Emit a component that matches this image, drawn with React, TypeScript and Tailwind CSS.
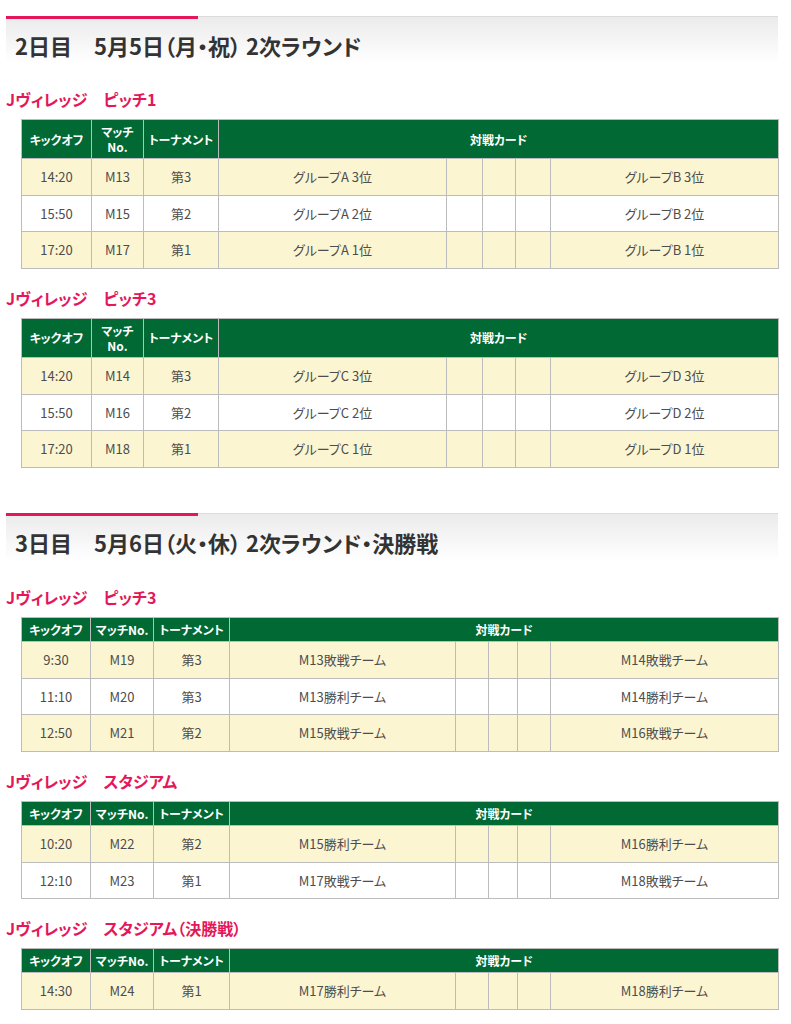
import React from "react";

type Row = { time: string; no: string; round: string; home: string; away: string };
type Venue = { name: string; rows: Row[] };

const day1: Venue[] = [
  {
    name: "Jヴィレッジ　ピッチ1",
    rows: [
      { time: "14:20", no: "M13", round: "第3", home: "グループA 3位", away: "グループB 3位" },
      { time: "15:50", no: "M15", round: "第2", home: "グループA 2位", away: "グループB 2位" },
      { time: "17:20", no: "M17", round: "第1", home: "グループA 1位", away: "グループB 1位" },
    ],
  },
  {
    name: "Jヴィレッジ　ピッチ3",
    rows: [
      { time: "14:20", no: "M14", round: "第3", home: "グループC 3位", away: "グループD 3位" },
      { time: "15:50", no: "M16", round: "第2", home: "グループC 2位", away: "グループD 2位" },
      { time: "17:20", no: "M18", round: "第1", home: "グループC 1位", away: "グループD 1位" },
    ],
  },
];

const day2: Venue[] = [
  {
    name: "Jヴィレッジ　ピッチ3",
    rows: [
      { time: "9:30", no: "M19", round: "第3", home: "M13敗戦チーム", away: "M14敗戦チーム" },
      { time: "11:10", no: "M20", round: "第3", home: "M13勝利チーム", away: "M14勝利チーム" },
      { time: "12:50", no: "M21", round: "第2", home: "M15敗戦チーム", away: "M16敗戦チーム" },
    ],
  },
  {
    name: "Jヴィレッジ　スタジアム",
    rows: [
      { time: "10:20", no: "M22", round: "第2", home: "M15勝利チーム", away: "M16勝利チーム" },
      { time: "12:10", no: "M23", round: "第1", home: "M17敗戦チーム", away: "M18敗戦チーム" },
    ],
  },
  {
    name: "Jヴィレッジ　スタジアム（決勝戦）",
    rows: [{ time: "14:30", no: "M24", round: "第1", home: "M17勝利チーム", away: "M18勝利チーム" }],
  },
];

const DayHeading = ({ title, className = "" }: { title: string; className?: string }) => (
  <div className={`relative border-t border-[#dcdcdc] ${className}`}>
    {/* pink accent */}
    <div className="absolute left-0 top-[-1px] h-[3px] w-[192px] bg-[#e5175b]"></div>
    <h2 className="h-[46px] bg-gradient-to-b from-[#ebebeb] to-white pl-[9px] pt-[13px] text-[22px] leading-[30px] font-bold text-[#333]">
      {title}
    </h2>
  </div>
);

const MatchTable = ({ venue, wide }: { venue: Venue; wide: boolean }) => {
  const cols = wide ? [70, 52, 75, 228, 36, 33, 35, 228] : [69, 63, 76, 226, 33, 29, 33, 228];
  const th = "border border-[#bcbcbc] bg-[#006934] p-0 whitespace-nowrap text-[12px] font-bold text-white leading-[15px]";
  const td = "border border-[#bcbcbc] p-0 text-center text-[13px] text-[#4d4d4d]";
  return (
    <div>
      <h3 className="h-[20px] text-[16px] leading-[20px] font-bold text-[#e5175b]">{venue.name}</h3>
      <table className="mt-[10px] ml-[15px] w-[757px] table-fixed border-collapse">
        <colgroup>
          {cols.map((w, i) => (
            <col key={i} style={{ width: w }} />
          ))}
        </colgroup>
        <thead>
          <tr className={wide ? "h-[39px]" : "h-[24px]"}>
            <th className={th}>キックオフ</th>
            <th className={th}>
              {wide ? (
                <>
                  マッチ
                  <br />
                  No.
                </>
              ) : (
                "マッチNo."
              )}
            </th>
            <th className={th}>トーナメント</th>
            <th className={th} colSpan={5}>
              対戦カード
            </th>
          </tr>
        </thead>
        <tbody>
          {venue.rows.map((r, i) => (
            <tr key={i} className={`h-[36.67px] ${i % 2 === 0 ? "bg-[#fcf5d2]" : "bg-white"}`}>
              <td className={td}>{r.time}</td>
              <td className={td}>{r.no}</td>
              <td className={td}>{r.round}</td>
              <td className={td}>{r.home}</td>
              <td className={td}></td>
              <td className={td}></td>
              <td className={td}></td>
              <td className={td}>{r.away}</td>
            </tr>
          ))}
        </tbody>
      </table>
    </div>
  );
};

export default function App() {
  return (
    <div className="min-h-[1024px] bg-white font-['Noto_Sans_CJK_JP','Noto_Sans',sans-serif] [font-feature-settings:'palt']">
      <div className="ml-[6px] w-[772px] pt-[16px]">
        <DayHeading title="2日目　5月5日（月・祝） 2次ラウンド" />
        <div className="mt-[26px] flex flex-col gap-[19px]">
          {day1.map((v, i) => (
            <MatchTable key={i} venue={v} wide />
          ))}
        </div>

        <DayHeading title="3日目　5月6日（火・休） 2次ラウンド・決勝戦" className="mt-[45px]" />
        <div className="mt-[27px] flex flex-col gap-[19px]">
          {day2.map((v, i) => (
            <MatchTable key={i} venue={v} wide={false} />
          ))}
        </div>
      </div>
    </div>
  );
}
